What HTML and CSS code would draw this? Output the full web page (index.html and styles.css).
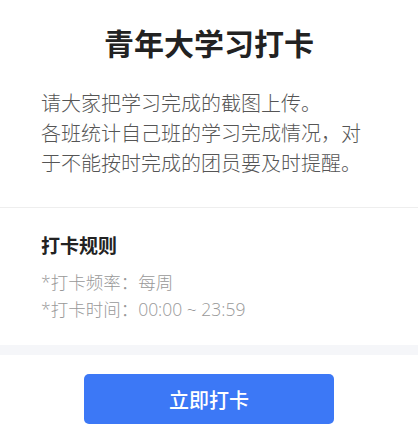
FILE: index.html
```html
<!DOCTYPE html>
<html lang="zh-CN">
<head>
    <meta charset="UTF-8">
    <meta name="viewport" content="width=device-width, initial-scale=1.0">
    <title>青年大学习打卡</title>
    <link rel="stylesheet" href="styles.css">
</head>
<body>
    <div class="intro">
        <h1 class="title">青年大学习打卡</h1>
        <p class="desc">请大家把学习完成的截图上传。<br>各班统计自己班的学习完成情况，对于不能按时完成的团员要及时提醒。</p>
    </div>

    <div class="rules">
        <h3>打卡规则</h3>
        <div class="rule-item">*打卡频率：每周</div>
        <div class="rule-item">*打卡时间：00:00 ~ 23:59</div>
    </div>

    <div class="footer">
        <button class="checkin-btn">立即打卡</button>
    </div>
</body>
</html>
```

FILE: styles.css
```css
* {
    box-sizing: border-box;
    margin: 0;
    padding: 0;
}

body {
    font-family: "Noto Sans CJK SC", "Noto Sans", sans-serif;
    background-color: #fff;
    color: #222;
}

.intro {
    padding: 22px 41px 29px;
    border-bottom: 1px solid #eeeeee;
}

.title {
    text-align: center;
    font-size: 30px;
    font-weight: bold;
    line-height: 40px;
    color: #222;
}

.desc {
    margin-top: 26px;
    font-size: 20px;
    font-weight: 300;
    line-height: 30px;
    color: #555;
}

.rules {
    padding: 23px 41px 22px;
    border-bottom: 10px solid #f5f6f9;
}

.rules h3 {
    font-size: 19px;
    font-weight: bold;
    line-height: 28px;
    color: #222;
    margin-bottom: 10px;
}

.rule-item {
    font-family: "Open Sans", "Noto Sans CJK SC", sans-serif;
    font-size: 17.5px;
    font-weight: 300;
    line-height: 27px;
    color: #999;
}

.footer {
    display: flex;
    justify-content: center;
    padding-top: 19px;
}

.checkin-btn {
    width: 250px;
    height: 50px;
    border: none;
    border-radius: 5px;
    background-color: #3c78f6;
    color: #fff;
    font-family: inherit;
    font-size: 20px;
    font-weight: 500;
    cursor: pointer;
}
```
